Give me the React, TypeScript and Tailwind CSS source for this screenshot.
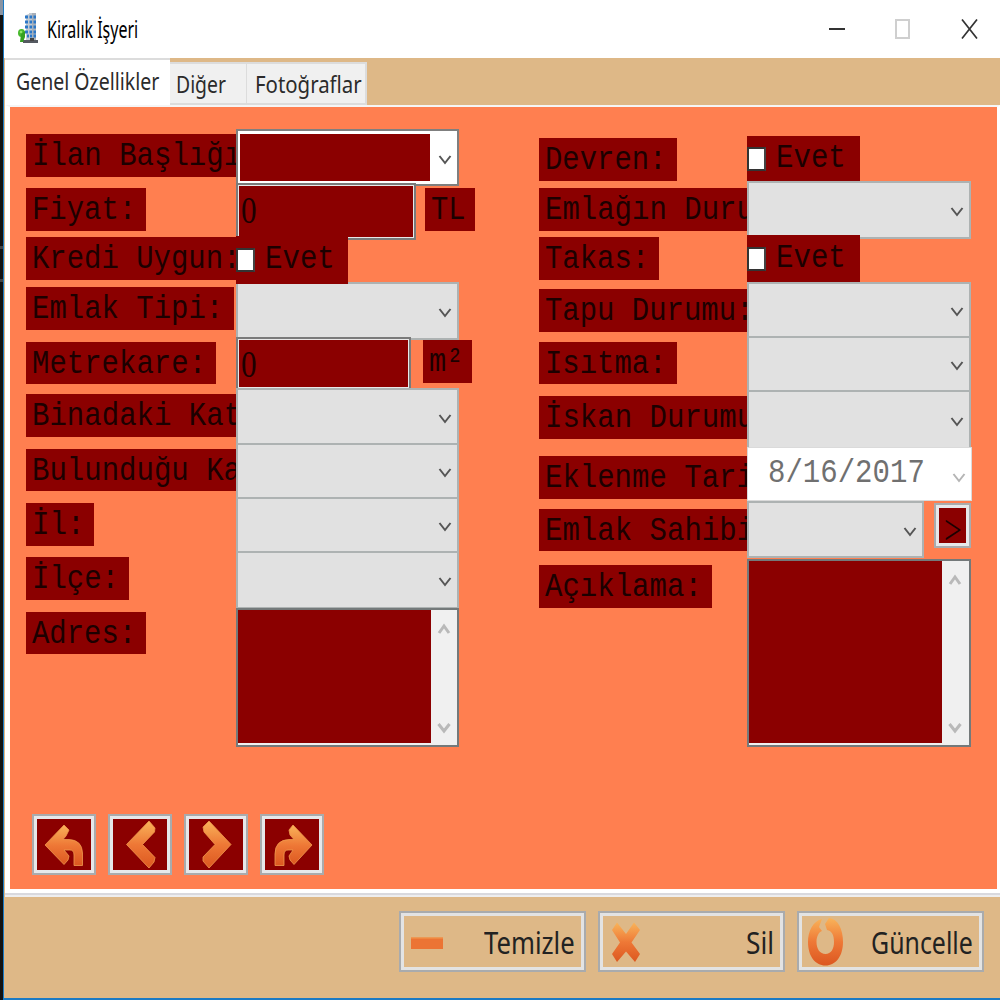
import React, { useLayoutEffect, useRef, useState } from 'react';

/** Single line of text, condensed horizontally to the given width. */
function Fit({ w, className = '', children }: { w: number; className?: string; children: string }) {
  const ref = useRef<HTMLSpanElement>(null);
  const [scale, setScale] = useState(1);
  useLayoutEffect(() => {
    if (ref.current) setScale(w / ref.current.offsetWidth);
  }, [w, children]);
  return (
    <span className={`block shrink-0 whitespace-nowrap ${className}`} style={{ width: w }}>
      <span ref={ref} className="inline-block origin-left" style={{ transform: `scaleX(${scale})` }}>
        {children}
      </span>
    </span>
  );
}

const MONO = "font-['Liberation_Mono',monospace] text-[33px]";
const ADV = 17.4;

function Mono({ children, className = '' }: { children: string; className?: string }) {
  return (
    <Fit w={children.length * ADV} className={`${MONO} ${className}`}>
      {children}
    </Fit>
  );
}

function Label({ text, className }: { text: string; className: string }) {
  return (
    <div className={`shrink-0 overflow-hidden bg-[#8b0000] pl-[6px] text-[#1c0000] ${className}`}>
      <Mono className="leading-[46px]">{text}</Mono>
    </div>
  );
}

function Chevron({ className = '', up = false }: { className?: string; up?: boolean }) {
  return (
    <svg viewBox="0 0 14 12" className={`h-3 w-[14px] shrink-0 ${className}`} fill="none" stroke="currentColor" strokeWidth="2">
      <path d={up ? 'M2 10 L7 3 L12 10' : 'M1.5 2 L7 9 L12.5 2'} />
    </svg>
  );
}

function Combo({ className }: { className: string }) {
  return (
    <div className={`flex shrink-0 items-center justify-end border-2 border-[#adb2b2] bg-[#e1e1e1] pr-[5px] pt-1 text-[#555] ${className}`}>
      <Chevron />
    </div>
  );
}

function Check({ className }: { className: string }) {
  return (
    <div className={`relative z-10 flex shrink-0 items-center bg-[#8b0000] text-[#1c0000] ${className}`}>
      <span className="h-[24px] w-[19px] shrink-0 border-2 border-[#333] border-r-[#444] bg-white" />
      <Mono className="ml-[10px] leading-[46px]">Evet</Mono>
    </div>
  );
}

function NumberBox({ className }: { className: string }) {
  return (
    <div className={`shrink-0 border-2 border-[#7a7a7a] bg-[#e8e8e8] p-[1px] ${className}`}>
      <div className="h-full bg-[#8b0000] pl-[2px] text-[#1c0000]">
        <Fit w={16} className="font-['Liberation_Serif',serif] text-[37px] leading-[49px]">0</Fit>
      </div>
    </div>
  );
}

function TextArea({ className }: { className: string }) {
  return (
    <div className={`flex shrink-0 border-2 border-[#74797a] bg-[#f0f0f0] ${className}`}>
      <div className="mb-[2px] w-[193px] bg-[#8b0000]" />
      <div className="flex flex-1 flex-col items-center justify-between pt-[13px] pr-[1px] pb-[11px] text-[#b9b9b9]">
        <Chevron up className="[stroke-width:3]" />
        <Chevron className="[stroke-width:3]" />
      </div>
    </div>
  );
}

function NavButton({ d }: { d: string }) {
  return (
    <button className="flex h-[61px] w-[64px] border-2 border-[#a9abad] bg-[#e6e8ea] p-[3px]">
      <span className="flex h-full w-full bg-[#8b0000]">
        <svg viewBox="0 0 54 51" className="h-full w-full">
          <path d={d} fill="url(#orange)" stroke="#ef9a4e" strokeWidth="0.8" strokeLinejoin="round" />
        </svg>
      </span>
    </button>
  );
}

function ActionButton({ text, w, icon }: { text: string; w: number; icon: React.ReactNode }) {
  return (
    <button className="flex h-[61px] w-[187px] border-2 border-[#a9abad] bg-[#e3e3e3] p-[3px]">
      <span className="flex h-full w-full items-center justify-between bg-[#deb887] pr-[6px] pl-[5px]">
        {icon}
        <Fit w={w} className="text-left font-['Noto_Sans',sans-serif] text-[31px] leading-[50px] text-[#222]">
          {text}
        </Fit>
      </span>
    </button>
  );
}

const UNDO = 'M8 26 L27 6 L32 11 L29 17 L26 20.500 H32 Q45 21 45.500 34 V46.500 H37 V36 Q37 31 33 31 H27 L32 37 L31 41 L27 45.500 Z';
const LEFT = 'M13.500 25.500 L36 2 L42 9 L41.500 13 L29.500 25.500 L42 38.500 L41 43 L36 49 Z';
const RIGHT = 'M42 25.500 L20 2 L14 8 L15 13 L26 25.500 L14 38 L14 42 L20 49 Z';
const REDO = 'M47 26 L28 6 L24 11 L25 16 L29 20.500 H24 Q10 21 10 35 V46.500 H19 V36 Q19 31 23 31 H28 L24 37 L25 41 L29 45.500 Z';

export default function App() {
  return (
    <div className="flex h-[1000px] w-[1000px] overflow-hidden bg-white">
      <svg className="absolute h-0 w-0">
        <defs>
          <linearGradient id="orange" x1="0" y1="0" x2="0" y2="1">
            <stop offset="0" stopColor="#f9b45a" />
            <stop offset="0.5" stopColor="#ee7836" />
            <stop offset="1" stopColor="#dc5720" />
          </linearGradient>
        </defs>
      </svg>

      <div className="flex w-[3px] shrink-0 flex-col bg-[#121212]">
        <div className="h-[15px] bg-[#8994a3]" />
        <div className="mt-[231px] h-[3px] bg-[#444]" />
        <div className="mt-[30px] h-[3px] bg-[#444]" />
      </div>

      <div className="flex min-w-0 flex-1 flex-col border-b-2 border-l border-[#1a7ac4]">
        <header className="flex h-[58px] shrink-0 items-center bg-white pl-[14px]">
          <svg viewBox="0 0 20 32" className="mt-[-3px] h-8 w-5">
            <path d="M8 3 L11 2 V1 H18 V28 H8 Z" fill="#c3cad2" />
            <path d="M14 1 H18 V28 H14 Z" fill="#a8b0ba" />
            <path d="M7 5H10M11.500 5H14M15.500 5H18M7 10H10M11.500 10H14M15.500 10H18M7 15H10M11.500 15H14M15.500 15H18M7 20H10M11.500 20H14M15.500 20H18M9 24H11M12 24H14M15.500 24H18" stroke="#2c78c8" strokeWidth="3.200" />
            <path d="M5 29.500 H20" stroke="#555a61" strokeWidth="3" />
            <path d="M12 26 H16 V29 H12Z" fill="#444" />
            <ellipse cx="3.500" cy="21" rx="3.500" ry="4" fill="#46b82c" />
            <path d="M3 22 L7 19 V25 L5 30 H2 Z" fill="#35a020" />
            <circle cx="3" cy="20" r="1.300" fill="#8ee269" />
          </svg>
          <Fit w={91} className="ml-[9px] font-['Noto_Sans',sans-serif] text-[23px] leading-[56px]">Kiralık İşyeri</Fit>
          <div className="ml-auto flex items-center pr-[22px]">
            <span className="h-[2px] w-[16px] bg-[#333]" />
            <span className="ml-[50px] h-[20px] w-[15px] border-2 border-[#cfcfcf]" />
            <svg viewBox="0 0 17 20" className="ml-[51px] h-5 w-[17px]" fill="none" stroke="#333" strokeWidth="1.700">
              <path d="M1 0.500 L16 19.500 M16 0.500 L1 19.500" />
            </svg>
          </div>
        </header>

        <main className="flex min-h-0 flex-1 flex-col bg-[#deb887] pl-px">
          <nav className="flex h-[47px] shrink-0 items-end font-['Noto_Sans',sans-serif] text-[24px] text-[#2b2b2b]">
            <div className="h-[47px] w-[165px] border-t-2 border-[#dcdcdc] bg-white pl-[11px]">
              <Fit w={143} className="leading-[41px]">Genel Özellikler</Fit>
            </div>
            <div className="h-[43px] w-[77px] border-y-2 border-r border-[#dcdcdc] bg-[#f0f0f0] pl-[6px]">
              <Fit w={50} className="leading-[40px]">Diğer</Fit>
            </div>
            <div className="h-[43px] w-[120px] border-y-2 border-r-2 border-[#dcdcdc] bg-[#f0f0f0] pl-[8px]">
              <Fit w={107} className="leading-[40px]">Fotoğraflar</Fit>
            </div>
          </nav>

          <section className="flex h-[792px] shrink-0 flex-col border-b-2 border-[#eeeeef] bg-[#d9d9de] pb-[2px]">
            <div className="flex h-full flex-col border-t-2 border-r-[3px] border-b-4 border-l-[5px] border-t-[#f5f5f5] border-r-white border-b-white border-l-white bg-[#ff7f50]">
              <div className="flex h-[707px] shrink-0 pl-4">
                <div className="w-[210px] shrink-0 overflow-hidden pt-[27px]">
                  <Label text="İlan Başlığı:" className="h-[43px] w-[240px]" />
                  <Label text="Fiyat:" className="mt-[11px] h-[43px] w-[120px]" />
                  <Label text="Kredi Uygun:" className="mt-[6px] h-[43px] w-[240px]" />
                  <Label text="Emlak Tipi:" className="mt-[7px] h-[43px] w-[208px]" />
                  <Label text="Metrekare:" className="mt-[12px] h-[42px] w-[190px]" />
                  <Label text="Binadaki Kat:" className="mt-[10px] h-[43px] w-[240px]" />
                  <Label text="Bulunduğu Kat:" className="mt-[12px] h-[42px] w-[250px]" />
                  <Label text="İl:" className="mt-[12px] h-[43px] w-[68px]" />
                  <Label text="İlçe:" className="mt-[11px] h-[43px] w-[103px]" />
                  <Label text="Adres:" className="mt-[12px] h-[42px] w-[120px]" />
                </div>

                <div className="w-[303px] shrink-0 pt-[22px]">
                  <div className="h-[54px]">
                    <div className="flex h-[57px] w-[223px] items-center border-2 border-[#7f7f7f] bg-white pr-[5px] pl-[2px]">
                      <div className="h-[47px] w-[190px] bg-[#8b0000]" />
                      <Chevron className="ml-auto mt-1 text-[#555]" />
                    </div>
                  </div>
                  <div className="flex h-[53px] items-start">
                    <NumberBox className="relative h-[57px] w-[180px]" />
                    <Label text="TL" className="mt-[5px] ml-[9px] h-[43px] w-[50px]" />
                  </div>
                  <div className="h-[46px]"><Check className="h-[48px] w-[112px]" /></div>
                  <div className="h-[55px]"><Combo className="h-[58px] w-[223px]" /></div>
                  <div className="flex h-[51px] items-start">
                    <NumberBox className="relative h-[53px] w-[175px]" />
                    <Label text="m²" className="mt-[3px] ml-[12px] h-[43px] w-[49px]" />
                  </div>
                  <div className="relative h-[55px]"><Combo className="h-[57px] w-[223px]" /></div>
                  <div className="relative h-[54px]"><Combo className="h-[56px] w-[223px]" /></div>
                  <div className="relative h-[54px]"><Combo className="h-[56px] w-[223px]" /></div>
                  <div className="relative h-[57px]"><Combo className="h-[58px] w-[223px]" /></div>
                  <TextArea className="relative h-[139px] w-[223px]" />
                </div>

                <div className="w-[208px] shrink-0 overflow-hidden pt-[31px]">
                  <Label text="Devren:" className="h-[43px] w-[138px]" />
                  <Label text="Emlağın Durumu:" className="mt-[7px] h-[43px] w-[270px]" />
                  <Label text="Takas:" className="mt-[6px] h-[43px] w-[120px]" />
                  <Label text="Tapu Durumu:" className="mt-[9px] h-[43px] w-[240px]" />
                  <Label text="Isıtma:" className="mt-[10px] h-[42px] w-[138px]" />
                  <Label text="İskan Durumu:" className="mt-[12px] h-[43px] w-[240px]" />
                  <Label text="Eklenme Tarihi:" className="mt-[17px] h-[43px] w-[270px]" />
                  <Label text="Emlak Sahibi:" className="mt-[10px] h-[42px] w-[240px]" />
                  <Label text="Açıklama:" className="mt-[14px] h-[43px] w-[173px]" />
                </div>

                <div className="w-[226px] shrink-0 pt-[29px]">
                  <div className="h-[45px]"><Check className="h-[45px] w-[113px]" /></div>
                  <div className="h-[54px]"><Combo className="h-[58px] w-[224px]" /></div>
                  <div className="h-[47px]"><Check className="h-[47px] w-[113px]" /></div>
                  <div className="h-[54px]"><Combo className="h-[56px] w-[224px]" /></div>
                  <div className="relative h-[54px]"><Combo className="h-[56px] w-[224px]" /></div>
                  <div className="relative h-[57px]"><Combo className="h-[59px] w-[224px]" /></div>
                  <div className="relative flex h-[54px] w-[225px] items-center border border-[#dadada] bg-white pr-[5px] pl-[20px] text-[#707070]">
                    <Mono className="leading-[54px]">8/16/2017</Mono>
                    <Chevron className="mt-2 ml-auto text-[#b5b5b5]" />
                  </div>
                  <div className="relative flex h-[58px] items-start">
                    <Combo className="h-[57px] w-[177px]" />
                    <button className="mt-[2px] ml-[10px] flex h-[45px] w-[37px] border-2 border-[#a9abad] bg-[#e6e8ea] p-[3px]">
                      <span className="flex h-full w-full items-center justify-center bg-[#8b0000]">
                        <Fit w={18} className="mt-2 font-['Liberation_Serif',serif] text-[42px] leading-[34px] text-[#1c0000]">&gt;</Fit>
                      </span>
                    </button>
                  </div>
                  <TextArea className="h-[188px] w-[224px]" />
                </div>
              </div>

              <div className="flex gap-[12px] pl-[22px]">
                <NavButton d={UNDO} />
                <NavButton d={LEFT} />
                <NavButton d={RIGHT} />
                <NavButton d={REDO} />
              </div>
            </div>
          </section>

          <footer className="flex justify-end gap-[12px] pt-[14px] pr-[16px]">
            <ActionButton
              text="Temizle"
              w={91}
              icon={
                <svg viewBox="0 0 36 50" className="h-[50px] w-9">
                  <path d="M2 20.500H34V32H2Z" fill="#ec7434" />
                  <path d="M2 21H34" stroke="#f39a4c" />
                </svg>
              }
            />
            <ActionButton
              text="Sil"
              w={28}
              icon={
                <svg viewBox="0 0 36 50" className="h-[50px] w-9">
                  <path d="M9 5.500 L18 17 L26 5.500 L32 13 L23.500 25.500 L32 37 L27 45 L18 34.500 L9 45 L4 37 L12 25.500 L4 13 Z" fill="url(#orange)" />
                </svg>
              }
            />
            <ActionButton
              text="Güncelle"
              w={102}
              icon={
                <svg viewBox="0 0 36 50" className="h-[50px] w-9">
                  <path d="M15 2 C6 4 1 14 1 25 C1 39 8 48.500 18.500 48.500 C29 48.500 36 39 36 25 C36 12 31 2 22 1 L18 7 L20 13 C25 14 27 18 27 25 C27 32 24 37 18.500 37 C13 37 9.500 32 9.500 25 C9.500 19 12 15 15 14 L12 10 Z" fill="url(#orange)" />
                </svg>
              }
            />
          </footer>
        </main>
      </div>
    </div>
  );
}
